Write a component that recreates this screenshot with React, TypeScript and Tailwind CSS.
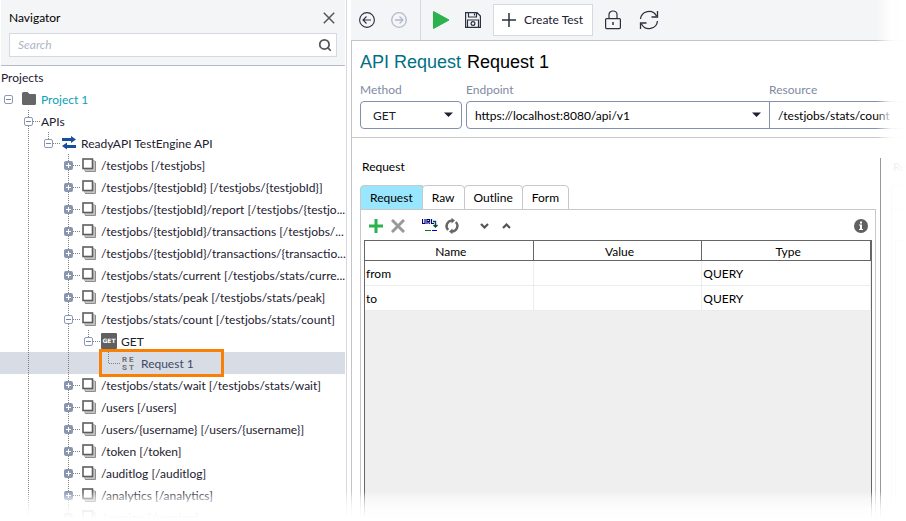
import type { ReactNode } from "react";
import { Search } from "lucide-react";

type NodeKind = "project" | "group" | "api" | "resource" | "method" | "request";

interface TreeNode {
  label: string;
  kind: NodeKind;
  // one entry per indent column between the root and this node, true draws a guide
  guides: boolean[];
  open?: boolean;
  last?: boolean;
}

const resource = (label: string, open = false): TreeNode => ({
  label,
  kind: "resource",
  guides: [true, false],
  open,
});

const nodes: TreeNode[] = [
  { label: "Project 1", kind: "project", guides: [], open: true },
  { label: "APIs", kind: "group", guides: [], open: true },
  { label: "ReadyAPI TestEngine API", kind: "api", guides: [true], open: true, last: true },
  resource("/testjobs [/testjobs]"),
  resource("/testjobs/{testjobId} [/testjobs/{testjobId}]"),
  resource("/testjobs/{testjobId}/report [/testjobs/{testjo..."),
  resource("/testjobs/{testjobId}/transactions [/testjobs/..."),
  resource("/testjobs/{testjobId}/transactions/{transactio..."),
  resource("/testjobs/stats/current [/testjobs/stats/curre..."),
  resource("/testjobs/stats/peak [/testjobs/stats/peak]"),
  resource("/testjobs/stats/count [/testjobs/stats/count]", true),
  { label: "GET", kind: "method", guides: [true, false, true], open: true, last: true },
  { label: "Request 1", kind: "request", guides: [true, false, true, false], last: true },
  resource("/testjobs/stats/wait [/testjobs/stats/wait]"),
  resource("/users [/users]"),
  resource("/users/{username} [/users/{username}]"),
  resource("/token [/token]"),
  resource("/auditlog [/auditlog]"),
  resource("/analytics [/analytics]"),
  resource("/version [/version]"),
];

const params = [
  { name: "from", value: "", type: "QUERY" },
  { name: "to", value: "", type: "QUERY" },
];

const tabs = ["Request", "Raw", "Outline", "Form"];

function Guide({ on }: { on: boolean }) {
  return (
    <svg className="w-5 h-[22px] shrink-0" viewBox="0 0 20 22">
      {on && <path d="M10.5 0V22" stroke="#808080" strokeDasharray="1 1" />}
    </svg>
  );
}

function Branch({ node }: { node: TreeNode }) {
  const dots = { stroke: "#808080", strokeDasharray: "1 1", fill: "none" };

  if (node.kind === "request") {
    return (
      <svg className="w-[23px] h-[22px] shrink-0" viewBox="0 0 23 22">
        <path d="M10.5 0V11.5H22" {...dots} />
      </svg>
    );
  }

  const root = node.kind === "project";
  return (
    <svg
      className={root ? "w-[21px] h-[22px] shrink-0" : "w-[23px] h-[22px] shrink-0"}
      viewBox={root ? "2 0 21 22" : "0 0 23 22"}
    >
      {!root && <path d={node.last ? "M10.5 0V7" : "M10.5 0V22"} {...dots} />}
      {!root && <path d="M15 11.5H23" {...dots} />}
      {node.open ? (
        <>
          <rect x="6.5" y="7.5" width="8" height="8" rx="1.5" fill="#fff" stroke="#8e9ab3" />
          <path d="M8 11.5H13" stroke="#7a86a0" />
        </>
      ) : (
        <>
          <rect x="6" y="7" width="9" height="9" rx="2" fill="#8a96ae" />
          <path d="M8 11.5H13M10.5 9V14" stroke="#fff" />
        </>
      )}
    </svg>
  );
}

function NodeIcon({ kind }: { kind: NodeKind }) {
  switch (kind) {
    case "project":
      return (
        <svg className="w-5 h-[22px] shrink-0" viewBox="0 0 20 22">
          <path d="M1 5.500Q1 4 2.500 4H6.500L8.500 6H14Q15 6 15 7V15.500Q15 17 13.500 17H2.500Q1 17 1 15.500Z" fill="#666" />
        </svg>
      );
    case "api":
      return (
        <svg className="w-5 h-[22px] shrink-0" viewBox="0 0 20 22">
          <path d="M1 6H10V4L15 7.500L10 11V9H1ZM15 16H6V17.500L1 14L6 10.500V13H15Z" fill="#174f9c" />
        </svg>
      );
    case "resource":
      return (
        <svg className="w-5 h-[22px] shrink-0" viewBox="0 0 20 22">
          <path d="M4 17.500H14.500V7" fill="none" stroke="#8c8c8c" />
          <path d="M3 16H13V6" fill="none" stroke="#c4c4c4" strokeWidth="2" />
          <rect x="2" y="5" width="9.500" height="9.500" fill="#fff" stroke="#5e5e5e" strokeWidth="1.600" />
        </svg>
      );
    case "method":
      return (
        <svg className="w-5 h-[22px] shrink-0" viewBox="0 0 20 22">
          <rect y="3" width="16" height="16" rx="1" fill="#606060" />
          <text x="8" y="13" textAnchor="middle" fill="#fff" fontSize="6" fontWeight="700" fontFamily="DejaVu Sans, sans-serif">
            GET
          </text>
        </svg>
      );
    case "request":
      return (
        <svg className="w-5 h-[22px] shrink-0" viewBox="0 0 20 22" fill="#707070" fontSize="8" fontWeight="700" fontFamily="Roboto, sans-serif">
          <text x="1" y="10">R</text>
          <text x="8" y="10">E</text>
          <text x="1" y="18">S</text>
          <text x="8" y="18">T</text>
        </svg>
      );
    default:
      return null;
  }
}

function TreeRow({ node }: { node: TreeNode }) {
  const selected = node.kind === "request";
  let color = "text-[#1c2030]";
  if (node.kind === "project") color = "text-[#0a9fb8]";
  if (selected) color = "text-[#3d4b66]";

  return (
    <li className={selected ? "relative mr-px flex h-[22px] items-center bg-[#d8dce4]" : "flex h-[22px] items-center"}>
      {node.kind !== "project" && <span className="w-[18px] shrink-0" />}
      {node.guides.map((on, i) => (
        <Guide key={i} on={on} />
      ))}
      <Branch node={node} />
      <NodeIcon kind={node.kind} />
      <span className={`pt-0.5 whitespace-nowrap ${color}`}>{node.label}</span>
      {selected && (
        <span className="absolute -top-[3px] -bottom-[3px] left-[99px] w-[125px] border-3 border-[#f98006]" />
      )}
    </li>
  );
}

function Navigator() {
  return (
    <aside className="flex w-[347px] shrink-0 flex-col overflow-hidden border-r border-[#d5d9e3]">
      <div className="mx-px shrink-0 border-b border-[#b4bcc8] bg-[#f4f5f7] px-2 py-2">
        <div className="flex h-5 items-center justify-between">
          <h2 className="text-black">Navigator</h2>
          <button aria-label="Close navigator" className="mr-0.5">
            <svg className="size-3" viewBox="0 0 12 12" fill="none" stroke="#555" strokeWidth="1.500">
              <path d="M.8 .8L11.200 11.200M11.200 .8L.8 11.200" />
            </svg>
          </button>
        </div>
        <label className="mt-[5px] flex h-6 items-center border border-[#d5d9e3] bg-white pr-1 pl-2">
          <input
            type="text"
            aria-label="Search"
            placeholder="Search"
            className="min-w-0 flex-1 outline-none placeholder:text-[#aeb6c8] placeholder:italic"
          />
          <Search className="size-[14px] text-[#555]" strokeWidth={3} />
        </label>
      </div>
      <div className="flex h-[22px] shrink-0 items-center pt-0.5 pl-px text-[#1c2030]">Projects</div>
      <ul>
        {nodes.map((node) => (
          <TreeRow key={node.label} node={node} />
        ))}
      </ul>
    </aside>
  );
}

function ToolButton({ label, className, children }: { label: string; className: string; children: ReactNode }) {
  return (
    <button aria-label={label} className={`flex shrink-0 items-center justify-center ${className}`}>
      {children}
    </button>
  );
}

function Toolbar() {
  return (
    <div className="flex h-10 shrink-0 items-center bg-[#f4f5f7]">
      <ToolButton label="Back" className="ml-2 size-4">
        <svg className="size-4" viewBox="0 0 16 16" fill="none" stroke="#2b3040" strokeWidth="1.100">
          <circle cx="8" cy="8" r="7.400" />
          <path d="M12 8H4.200M7.500 4.500L4 8L7.500 11.500" />
        </svg>
      </ToolButton>
      <ToolButton label="Forward" className="ml-4 size-4">
        <svg className="size-4" viewBox="0 0 16 16" fill="none" stroke="#b3bac9" strokeWidth="1.300">
          <circle cx="8" cy="8" r="7.300" />
          <path d="M4 8H11.800M8.500 4.500L12 8L8.500 11.500" />
        </svg>
      </ToolButton>
      <span className="ml-[13px] h-full w-px bg-[#d5d9e3]" />
      <ToolButton label="Run" className="ml-3 w-4 h-5">
        <svg className="w-4 h-5" viewBox="0 0 16 20">
          <path d="M.5 1.500V18.500L16 10Z" fill="#2bb24c" stroke="#2bb24c" strokeLinejoin="round" />
        </svg>
      </ToolButton>
      <ToolButton label="Save" className="ml-4 size-4">
        <svg className="size-4" viewBox="0 0 16 16" fill="none" stroke="#2b3040" strokeWidth="1.200">
          <path d="M.6 .6H12L15.400 4V15.400H.6ZM3.500 .6V5H11.500V.6M9.500 1.500V3.500" />
          <path d="M2.500 15V8H13.500V15" />
          <circle cx="8" cy="11.500" r="1.900" />
        </svg>
      </ToolButton>
      <button className="ml-3 flex h-8 w-[100px] shrink-0 items-center gap-2 border border-[#d5d9e3] bg-white pl-2 whitespace-nowrap text-[#1c2030]">
        <svg className="size-[14px] shrink-0" viewBox="0 0 14 14" stroke="#2b3040" strokeWidth="1.500">
          <path d="M7 0V14M0 7H14" />
        </svg>
        Create Test
      </button>
      <ToolButton label="Lock" className="ml-3 w-4 h-5">
        <svg className="w-4 h-5" viewBox="0 0 16 20" fill="none" stroke="#2b3040" strokeWidth="1.200">
          <rect x=".6" y="8.600" width="14.800" height="10" rx="1" />
          <path d="M4 8.500V4.500A4 3.500 0 0 1 12 4.500V8.500" />
          <path d="M8 12V15" strokeWidth="1.500" />
        </svg>
      </ToolButton>
      <ToolButton label="Refresh" className="ml-[18px] w-5 h-5">
        <svg className="size-5" viewBox="0 0 20 20" fill="none" stroke="#2b3040" strokeWidth="1.300">
          <path d="M1.500 9A8.500 8.500 0 0 1 17.500 6M18.500 1V7H12.500" />
          <path d="M18.500 11A8.500 8.500 0 0 1 2.500 14M1.500 19V13H7.500" />
        </svg>
      </ToolButton>
    </div>
  );
}

function Caret() {
  return (
    <svg className="pointer-events-none absolute top-[11px] right-[9px] w-[9px] h-[5px]" viewBox="0 0 9 5">
      <path d="M0 .5H9L4.500 5Z" fill="#1c2030" />
    </svg>
  );
}

function RequestBar() {
  const label = "block h-[22px] leading-[22px] text-[#7f8aa3]";
  return (
    <div className="flex shrink-0 border-b border-[#c8c8c8] pb-2 pl-2">
      <div className="mr-1 w-[102px] shrink-0">
        <label htmlFor="method" className={label}>Method</label>
        <div className="relative">
          <select id="method" className="h-7 w-full appearance-none rounded border border-[#8390ab] bg-white pt-0.5 pl-3 text-[#1c2030]">
            <option>GET</option>
          </select>
          <Caret />
        </div>
      </div>
      <div className="min-w-0 flex-1">
        <label htmlFor="endpoint" className={label}>Endpoint</label>
        <div className="relative">
          <select id="endpoint" className="h-7 w-full appearance-none rounded-l border border-[#8390ab] bg-white pt-0.5 pl-2 text-black">
            <option>https://localhost:8080/api/v1</option>
          </select>
          <Caret />
        </div>
      </div>
      <div className="-ml-px w-[137px] shrink-0">
        <label htmlFor="resource" className={label}>Resource</label>
        <input
          id="resource"
          type="text"
          defaultValue="/testjobs/stats/count"
          className="h-7 w-full border border-r-0 border-[#8390ab] bg-white pl-2 text-black outline-none"
        />
      </div>
    </div>
  );
}

function ParamTools() {
  return (
    <div className="flex h-[30px] items-center pt-0.5 pl-[7px]">
      <ToolButton label="Add" className="size-4">
        <svg className="size-[14px]" viewBox="0 0 14 14" stroke="#2bb24c" strokeWidth="3">
          <path d="M7 0V14M0 7H14" />
        </svg>
      </ToolButton>
      <ToolButton label="Remove" className="ml-1.5 size-4">
        <svg className="size-[14px]" viewBox="0 0 14 14" stroke="#999" strokeWidth="3">
          <path d="M1 1L13 13M13 1L1 13" />
        </svg>
      </ToolButton>
      <ToolButton label="Update from URL" className="ml-4 size-4">
        <svg className="size-4" viewBox="0 0 16 16" fill="none" stroke="#00007a" strokeWidth="1.200">
          <path d="M.5 1V5.500H3V1M5 6V1.500H7.500V3.500H5M6.500 3.500L7.500 6M9.500 1V5.500H12" />
          <path d="M11 3.500H13.500V8.500M11.500 7L13.500 9L15.500 7" stroke="#0b4a4a" strokeWidth="1.400" />
          <path d="M3 12.500H9" stroke="#008000" strokeWidth="1" />
          <path d="M10 12.500H15" stroke="#0000d0" strokeWidth="1" />
        </svg>
      </ToolButton>
      <ToolButton label="Revert" className="ml-1.5 size-4">
        <svg className="size-4" viewBox="0 0 16 16" fill="none" stroke="#666" strokeWidth="2.400">
          <path d="M4.200 12A5.500 5.500 0 0 1 8 2.600M11.800 4A5.500 5.500 0 0 1 8 13.400" />
          <path d="M7.500 -.2V5.400L11 2.600ZM8.500 10.600V16.200L5 13.400Z" fill="#666" stroke="none" />
        </svg>
      </ToolButton>
      <ToolButton label="Move down" className="ml-4 size-4">
        <svg className="w-[9px] h-[6px]" viewBox="0 0 9 6" fill="none" stroke="#555" strokeWidth="2.200">
          <path d="M1 1L4.500 4.500L8 1" />
        </svg>
      </ToolButton>
      <ToolButton label="Move up" className="ml-1.5 size-4">
        <svg className="w-[9px] h-[6px]" viewBox="0 0 9 6" fill="none" stroke="#555" strokeWidth="2.200">
          <path d="M1 5L4.500 1.500L8 5" />
        </svg>
      </ToolButton>
      <ToolButton label="Info" className="mr-[7px] ml-auto size-[14px]">
        <svg className="size-[14px]" viewBox="0 0 14 14">
          <circle cx="7" cy="7" r="7" fill="#606060" />
          <path d="M6 2.500H8V4.500H6ZM5 5.500H8V10H9V11H5V10H6V6.500H5Z" fill="#fff" />
        </svg>
      </ToolButton>
    </div>
  );
}

function ParamTable() {
  const cell = "border-r border-b border-[#ececec] p-0 pt-px pl-px";
  return (
    <div className="mr-[3px] ml-[3px] flex-1 border border-b-0 border-[#666] bg-[#efefef]">
      <table className="w-full table-fixed border-separate border-spacing-0 bg-white text-black">
        <thead>
          <tr className="h-5">
            {["Name", "Value", "Type"].map((head) => (
              <th key={head} className="border-r border-b border-[#666] p-0 pt-0.5 pl-1 text-center leading-[17px] font-normal">
                {head}
              </th>
            ))}
          </tr>
        </thead>
        <tbody>
          {params.map((param) => (
            <tr key={param.name} className="h-[25px]">
              <td className={cell}>{param.name}</td>
              <td className={cell}>{param.value}</td>
              <td className={cell}>{param.type}</td>
            </tr>
          ))}
        </tbody>
      </table>
    </div>
  );
}

function RequestPane() {
  return (
    <section className="flex min-w-0 flex-1 flex-col pl-2">
      <h2 className="h-[47px] pt-5 pl-0.5 leading-[18px] text-black">Request</h2>
      <div role="tablist" className="relative z-10 flex h-[25px]">
        {tabs.map((tab, i) => (
          <button
            key={tab}
            role="tab"
            aria-selected={i === 0}
            className={
              i === 0
                ? "rounded-tl border border-[#c8c8c8] bg-[#99e6ff] px-[9px] text-black"
                : "-ml-px rounded-t border border-[#c8c8c8] bg-white px-[9px] text-black"
            }
          >
            {tab}
          </button>
        ))}
      </div>
      <div className="-mt-px flex flex-1 flex-col border border-b-0 border-[#c8c8c8]">
        <ParamTools />
        <ParamTable />
      </div>
    </section>
  );
}

function ResponsePane() {
  return (
    <section className="mt-5 ml-1 flex w-[26px] shrink-0 flex-col overflow-hidden border-l border-[#707070] pl-2.5">
      <h2 className="h-[27px] pl-0.5 leading-[18px] text-black">Re</h2>
      <div className="h-6 rounded-tl border-t border-l border-[#c8c8c8]" />
      <div className="flex flex-1 flex-col border-t border-l border-[#c8c8c8] pt-[30px] pl-[3px]">
        <div className="flex-1 border-t border-l border-[#c8c8c8]" />
      </div>
    </section>
  );
}

export default function App() {
  return (
    <div className="relative flex h-screen overflow-hidden bg-white font-['Lato',sans-serif] text-[12px]">
      <Navigator />
      <main className="ml-1 flex min-w-0 flex-1 flex-col">
        <Toolbar />
        <div className="flex min-h-0 flex-1 flex-col border-t border-l border-[#c4c4c4]">
          <h1 className="flex h-[38px] shrink-0 items-center gap-1.5 pt-1 pl-2 font-['Liberation_Sans',sans-serif] text-[18px] whitespace-nowrap text-black">
            <span className="text-[#007084]">API Request</span>
            <span>Request 1</span>
          </h1>
          <RequestBar />
          <div className="flex min-h-0 flex-1">
            <RequestPane />
            <ResponsePane />
          </div>
        </div>
      </main>

      {/* content fades out towards the right and bottom edges */}
      <div className="pointer-events-none absolute inset-y-0 right-0 z-20 w-[30px] bg-[linear-gradient(to_right,rgba(255,255,255,0),rgba(255,255,255,0.5)_8px,rgba(255,255,255,0.9)_15px,#fff)]" />
      <div className="pointer-events-none absolute inset-x-0 bottom-0 z-20 h-[30px] bg-[linear-gradient(to_bottom,rgba(255,255,255,0),rgba(255,255,255,0.5)_7px,rgba(255,255,255,0.85)_17px,#fff_28px)]" />
    </div>
  );
}
